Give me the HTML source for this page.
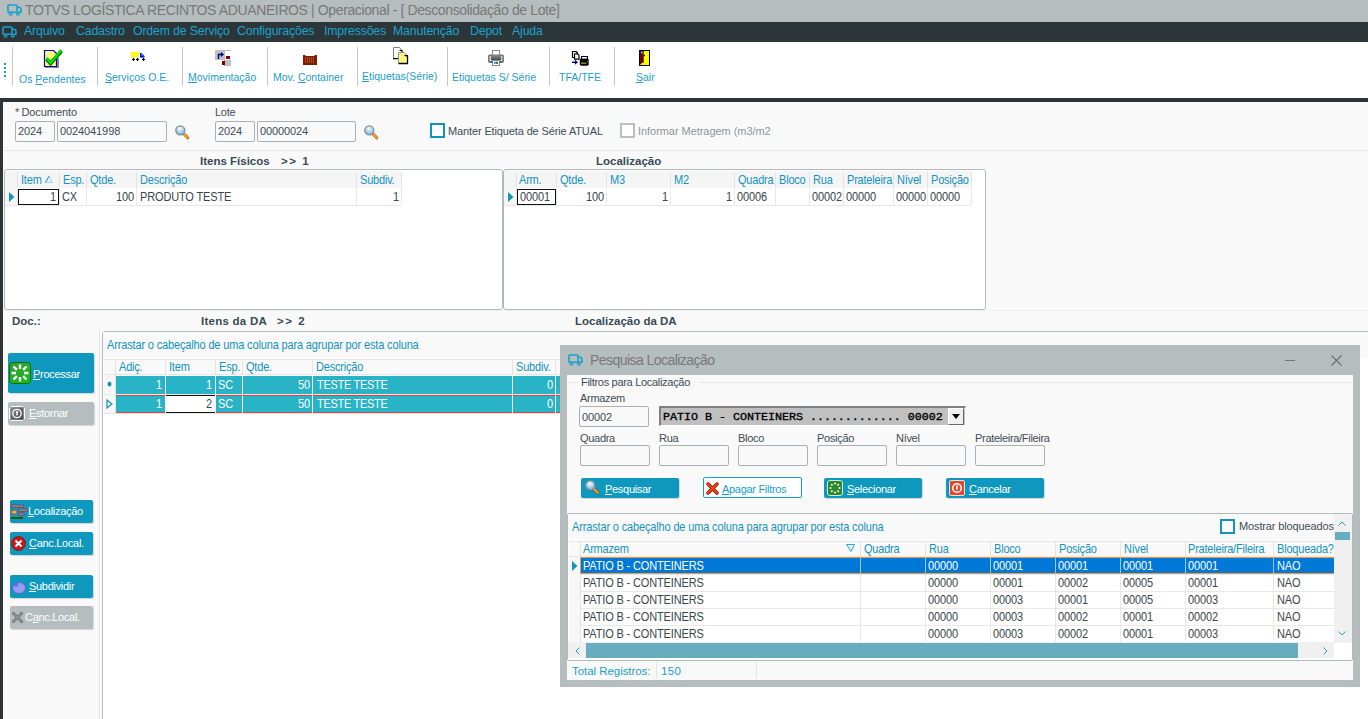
<!DOCTYPE html>
<html><head><meta charset="utf-8">
<style>
*{box-sizing:border-box}
html,body{margin:0;padding:0}
body{width:1368px;height:719px;position:relative;overflow:hidden;background:#f9f9f9;font-family:"Liberation Sans",sans-serif;}
.a{position:absolute}
.t{position:absolute;white-space:nowrap;line-height:1}
.u{text-decoration:underline;text-underline-offset:1px;text-decoration-thickness:1px}
.tb{color:#1b9dcd;font-size:10.5px}
.lbl{color:#3f4d56;font-size:11px;letter-spacing:-0.3px}
.gh{color:#1394c0;font-size:11px;letter-spacing:-0.2px;transform:scaleY(1.13);transform-origin:0 9.3px}
.gd{color:#3a464c;font-size:11px;letter-spacing:-0.1px;transform:scaleY(1.13);transform-origin:0 9.3px}
.bt{color:#fff;font-size:11px;letter-spacing:-0.3px}
.bold{color:#3a4a55;font-size:11.5px;font-weight:bold}
</style></head>
<body>

<div class="a" style="left:0px;top:0px;width:1368px;height:22px;background:#b6bdbf"></div>
<svg class="a" style="left:7px;top:4px" width="15" height="12" viewBox="0 0 15 12"><g fill="none" stroke="#1b9fca" stroke-width="1.6" stroke-linejoin="round"><rect x="1" y="1" width="9" height="7.2" rx="0.8"/><path d="M10 3.2h1.6a2.4 2.4 0 0 1 2.4 2.4v2.6h-4"/><circle cx="3.6" cy="9.7" r="1.35" fill="#b6bdbf" stroke-width="1.3"/><circle cx="10.9" cy="9.7" r="1.35" fill="#b6bdbf" stroke-width="1.3"/></g></svg>
<div class="t" style="left:25px;top:3px;font-size:14px;letter-spacing:-0.38px;color:#787878">TOTVS LOGÍSTICA RECINTOS ADUANEIROS | Operacional - [ Desconsolidação de Lote]</div>
<div class="a" style="left:0px;top:22px;width:1368px;height:20px;background:#2c3639"></div>
<svg class="a" style="left:2px;top:26px" width="15" height="12" viewBox="0 0 15 12"><g fill="none" stroke="#1b9fca" stroke-width="1.6" stroke-linejoin="round"><rect x="1" y="1" width="9" height="7.2" rx="0.8"/><path d="M10 3.2h1.6a2.4 2.4 0 0 1 2.4 2.4v2.6h-4"/><circle cx="3.6" cy="9.7" r="1.35" fill="#2c3639" stroke-width="1.3"/><circle cx="10.9" cy="9.7" r="1.35" fill="#2c3639" stroke-width="1.3"/></g></svg>
<div class="t" style="left:24px;top:25px;font-size:12.3px;letter-spacing:-0.15px;color:#1ba2cf">Arquivo</div>
<div class="t" style="left:76px;top:25px;font-size:12.3px;letter-spacing:-0.15px;color:#1ba2cf">Cadastro</div>
<div class="t" style="left:133px;top:25px;font-size:12.3px;letter-spacing:-0.15px;color:#1ba2cf">Ordem de Serviço</div>
<div class="t" style="left:237px;top:25px;font-size:12.3px;letter-spacing:-0.15px;color:#1ba2cf">Configurações</div>
<div class="t" style="left:324px;top:25px;font-size:12.3px;letter-spacing:-0.15px;color:#1ba2cf">Impressões</div>
<div class="t" style="left:393px;top:25px;font-size:12.3px;letter-spacing:-0.15px;color:#1ba2cf">Manutenção</div>
<div class="t" style="left:470px;top:25px;font-size:12.3px;letter-spacing:-0.15px;color:#1ba2cf">Depot</div>
<div class="t" style="left:512px;top:25px;font-size:12.3px;letter-spacing:-0.15px;color:#1ba2cf">Ajuda</div>
<div class="a" style="left:0px;top:42px;width:1368px;height:56px;background:#fff"></div>
<div class="a" style="left:4px;top:63px;width:2px;height:15px;background:repeating-linear-gradient(#1b9dcd 0 2px,transparent 2px 4px)"></div>
<div class="a" style="left:12px;top:47px;width:1px;height:39px;background:#c3c8ca"></div>
<div class="a" style="left:97px;top:47px;width:1px;height:39px;background:#c3c8ca"></div>
<div class="a" style="left:182px;top:47px;width:1px;height:39px;background:#c3c8ca"></div>
<div class="a" style="left:267px;top:47px;width:1px;height:39px;background:#c3c8ca"></div>
<div class="a" style="left:357px;top:47px;width:1px;height:39px;background:#c3c8ca"></div>
<div class="a" style="left:447px;top:47px;width:1px;height:39px;background:#c3c8ca"></div>
<div class="a" style="left:549px;top:47px;width:1px;height:39px;background:#c3c8ca"></div>
<div class="a" style="left:614px;top:47px;width:1px;height:39px;background:#c3c8ca"></div>
<div class="t tb" style="left:19px;top:74px;">Os <span class="u">P</span>endentes</div>
<div class="t tb" style="left:105px;top:72px;"><span class="u">S</span>erviços O.E.</div>
<div class="t tb" style="left:188px;top:72px;"><span class="u">M</span>ovimentação</div>
<div class="t tb" style="left:273px;top:72px;">Mov. <span class="u">C</span>ontainer</div>
<div class="t tb" style="left:362px;top:71px;"><span class="u">E</span>tiquetas(Série)</div>
<div class="t tb" style="left:452px;top:72px;">Etiquetas S/ Série</div>
<div class="t tb" style="left:559px;top:72px;">TFA/TFE</div>
<div class="t tb" style="left:636px;top:72px;"><span class="u">S</span>air</div>
<svg class="a" style="left:43px;top:48px" width="21" height="21" viewBox="0 0 21 21"><defs><pattern id="chk" width="2" height="2" patternUnits="userSpaceOnUse"><rect width="2" height="2" fill="#ffff00"/><rect width="1" height="1" fill="#fffff0"/><rect x="1" y="1" width="1" height="1" fill="#fffff0"/></pattern></defs><rect x="2" y="10" width="14" height="10" fill="#8c8c8c"/><path d="M1.5 2.5h9l3 3v13h-12z" fill="url(#chk)" stroke="#0000c8" stroke-width="1.2"/><path d="M3.5 11l4 4.5L18.5 3" fill="none" stroke="#006000" stroke-width="3.6" stroke-linejoin="miter"/><path d="M3.5 10.2l4 4.5L18.5 2.2" fill="none" stroke="#00e000" stroke-width="2.6"/></svg>
<svg class="a" style="left:131px;top:52px" width="15" height="11" viewBox="0 0 15 11"><rect x="0" y="0" width="8" height="5" fill="#ffff00"/><rect x="0" y="5" width="14" height="1" fill="#cfe8cf"/><path d="M9 1h1.5l3 3v1.5H9z" fill="#0000ff"/><path d="M10 2l2 2.2" stroke="#00ffff" stroke-width="1"/><path d="M2.5 6v3M1 7.5h3M6.5 6v3M5 7.5h3M12.5 6v3M11 7.5h3" stroke="#000" stroke-width="1.2"/></svg>
<svg class="a" style="left:215px;top:50px" width="16" height="16" viewBox="0 0 16 16"><rect x="0" y="0" width="10" height="10" fill="#c0c0c0"/><rect x="10" y="0" width="6" height="1" fill="#c0c0c0"/><rect x="9" y="10" width="7" height="6" fill="#c0c0c0"/><rect x="11" y="6" width="4" height="3" fill="#800000"/><rect x="7" y="11" width="3" height="4" fill="#800000"/><path d="M3.5 9V4.5h3" fill="none" stroke="#000080" stroke-width="1.4"/><path d="M6 2l3 2.5L6 7z" fill="#000080"/></svg>
<svg class="a" style="left:303px;top:55px" width="14" height="10" viewBox="0 0 14 10"><path d="M0 0h2l1 1h8l1-1h2v10H0z" fill="#7a1c00"/><path d="M2.5 2v6M4.5 2v6M6.5 2v6M8.5 2v6M10.5 2v6" stroke="#b84a00" stroke-width="1"/></svg>
<svg class="a" style="left:393px;top:47px" width="16" height="18" viewBox="0 0 16 18"><defs><pattern id="chk2" width="2" height="2" patternUnits="userSpaceOnUse"><rect width="2" height="2" fill="#ffff00"/><rect width="1" height="1" fill="#ffffff"/><rect x="1" y="1" width="1" height="1" fill="#ffffff"/></pattern></defs><path d="M0.5 11.5V0.5h6l2.5 3" fill="none" stroke="#808080" stroke-width="1"/><path d="M0 11.6h5.5" stroke="#000" stroke-width="1.3"/><path d="M6.5 3.5H9V5.5" fill="none" stroke="#000" stroke-width="1.2"/><path d="M5.5 5.5h5.5l3.5 3.5v7.5h-9z" fill="url(#chk2)"/><path d="M5.5 16.5V5.5h5.5l3.5 3.5" fill="none" stroke="#909090" stroke-width="1"/><path d="M14.5 9v7.5h-9" fill="none" stroke="#000" stroke-width="1.3"/><path d="M11.5 8.7h3v1.5" fill="none" stroke="#000" stroke-width="1.2"/></svg>
<svg class="a" style="left:488px;top:50px" width="16" height="16" viewBox="0 0 16 16"><defs><linearGradient id="pg" x1="0" y1="0" x2="0" y2="1"><stop offset="0" stop-color="#8a8a8a"/><stop offset="1" stop-color="#4a4a4a"/></linearGradient></defs><rect x="4.5" y="0.5" width="7" height="5" fill="#fff" stroke="#8a8a8a"/><rect x="0.5" y="5" width="15" height="7.5" rx="1" fill="#707070" stroke="#7a7a7a"/><rect x="1.5" y="6" width="1.5" height="4.5" fill="#c8d2dc"/><rect x="13" y="6" width="1.5" height="4.5" fill="#c8d2dc"/><rect x="3" y="5.5" width="10" height="4.5" fill="url(#pg)"/><rect x="2" y="10" width="12" height="1.2" fill="#d4e0ec"/><circle cx="14" cy="9.5" r="0.8" fill="#7ad07a"/><rect x="4.5" y="10.5" width="7" height="5" fill="#fff" stroke="#8a8a8a"/><rect x="6" y="11.8" width="1.8" height="2" fill="#2a8ae0"/><rect x="8" y="11.8" width="2" height="2" fill="#1a6a4a"/><rect x="3" y="11" width="1" height="1.5" fill="#202040"/><rect x="12" y="11" width="1" height="1.5" fill="#202040"/></svg>
<svg class="a" style="left:571px;top:50px" width="18" height="17" viewBox="0 0 18 17"><path d="M1.5 1.5h3.5l1.5 1.5v4.5h-5z" fill="#fff" stroke="#000" stroke-width="1.2" stroke-linejoin="round"/><path d="M3.5 3.8h3l1.5 1.5v3.9h-4.5z" fill="#fff" stroke="#000" stroke-width="1.2" stroke-linejoin="round"/><rect x="4.2" y="2.3" width="0.8" height="1.5" fill="#888"/><path d="M1 12.3h4" stroke="#000080" stroke-width="1.5"/><path d="M4 9.8l3 2.5-3 2.5z" fill="#000080"/><path d="M10.5 6.5h6v2.5h-6z" fill="#fff" stroke="#000" stroke-width="1.1"/><path d="M8.8 9.5l1.2-1.2h6.5l1.2 1.2v5l-1.2 1.2h-6.5l-1.2-1.2z" fill="#000"/><rect x="10" y="12.6" width="5.5" height="1.2" fill="#a8a800"/><rect x="16" y="11" width="0.8" height="0.8" fill="#a8a800"/><rect x="11" y="7.3" width="4.5" height="1.2" fill="#fff"/></svg>
<svg class="a" style="left:639px;top:50px" width="11" height="16" viewBox="0 0 11 16"><rect x="0.5" y="0.5" width="10" height="15" fill="#ffff00" stroke="#000" stroke-width="1"/><path d="M1 1h3v11l-3 3z" fill="#800000"/><path d="M4.2 1v12" stroke="#000" stroke-width="0.9"/><rect x="2" y="1.5" width="1.5" height="2" fill="#00ffff"/><circle cx="5.3" cy="5.5" r="0.8" fill="#000"/></svg>
<div class="a" style="left:0px;top:98px;width:1368px;height:4px;background:#2c3639"></div>
<div class="a" style="left:0px;top:98px;width:3px;height:621px;background:#2c3639"></div>
<div class="t lbl" style="left:15px;top:107px;letter-spacing:-0.05px">*&thinsp;Documento</div>
<div class="a" style="left:15px;top:121px;width:40px;height:21px;border:1px solid #a9b0b3;border-radius:2px;background:#f9f9f9"></div>
<div class="a" style="left:57px;top:121px;width:110px;height:21px;border:1px solid #a9b0b3;border-radius:2px;background:#f9f9f9"></div>
<div class="t lbl" style="left:18px;top:126px;letter-spacing:-0.1px">2024</div>
<div class="t lbl" style="left:60px;top:126px;letter-spacing:-0.1px">0024041998</div>
<svg class="a" style="left:175px;top:125px" width="15" height="15" viewBox="0 0 15 15"><defs><radialGradient id="mg" cx="0.45" cy="0.3" r="0.7"><stop offset="0" stop-color="#f4faff"/><stop offset="1" stop-color="#78b4ec"/></radialGradient></defs><path d="M8.8 8.8l4 4" stroke="#c04818" stroke-width="3" stroke-linecap="round"/><path d="M8.8 8.8l4 4" stroke="#f8c030" stroke-width="1.5" stroke-linecap="round"/><circle cx="5.3" cy="5.3" r="4.5" fill="url(#mg)" stroke="#8c8c8c" stroke-width="1.3"/></svg>
<div class="t lbl" style="left:215px;top:107px;">Lote</div>
<div class="a" style="left:215px;top:121px;width:40px;height:21px;border:1px solid #a9b0b3;border-radius:2px;background:#f9f9f9"></div>
<div class="a" style="left:257px;top:121px;width:99px;height:21px;border:1px solid #a9b0b3;border-radius:2px;background:#f9f9f9"></div>
<div class="t lbl" style="left:218px;top:126px;letter-spacing:-0.1px">2024</div>
<div class="t lbl" style="left:260px;top:126px;letter-spacing:-0.1px">00000024</div>
<svg class="a" style="left:364px;top:125px" width="15" height="15" viewBox="0 0 15 15"><defs><radialGradient id="mg" cx="0.45" cy="0.3" r="0.7"><stop offset="0" stop-color="#f4faff"/><stop offset="1" stop-color="#78b4ec"/></radialGradient></defs><path d="M8.8 8.8l4 4" stroke="#c04818" stroke-width="3" stroke-linecap="round"/><path d="M8.8 8.8l4 4" stroke="#f8c030" stroke-width="1.5" stroke-linecap="round"/><circle cx="5.3" cy="5.3" r="4.5" fill="url(#mg)" stroke="#8c8c8c" stroke-width="1.3"/></svg>
<div class="a" style="left:430px;top:123px;width:15px;height:15px;border:2px solid #1296b8;background:#fff"></div>
<div class="t lbl" style="left:448px;top:126px;letter-spacing:-0.13px">Manter Etiqueta de Série ATUAL</div>
<div class="a" style="left:620px;top:123px;width:15px;height:15px;border:2px solid #b9c0c2;background:#fff"></div>
<div class="t lbl" style="left:638px;top:126px;color:#8c969c;letter-spacing:-0.05px">Informar Metragem (m3/m2</div>
<div class="a" style="left:4px;top:150px;width:1364px;height:1px;background:#e3e5e6"></div>
<div class="t bold" style="left:200px;top:156px;">Itens Físicos</div>
<div class="t bold" style="left:281px;top:156px;letter-spacing:1.5px">&gt;&gt; 1</div>
<div class="t bold" style="left:596px;top:156px;">Localização</div>
<div class="a" style="left:4px;top:169px;width:499px;height:141px;border:1px solid #b4babc;border-radius:3px;background:#fff"></div>
<div class="a" style="left:5px;top:171px;width:396px;height:17px;background:#f5f5f5"></div>
<div class="a" style="left:17px;top:172px;width:1px;height:15px;background:#e4e4e4"></div>
<div class="a" style="left:59px;top:172px;width:1px;height:15px;background:#e4e4e4"></div>
<div class="a" style="left:86px;top:172px;width:1px;height:15px;background:#e4e4e4"></div>
<div class="a" style="left:136px;top:172px;width:1px;height:15px;background:#e4e4e4"></div>
<div class="a" style="left:356px;top:172px;width:1px;height:15px;background:#e4e4e4"></div>
<div class="a" style="left:401px;top:172px;width:1px;height:15px;background:#e4e4e4"></div>
<div class="t gh" style="left:21px;top:175px;">Item</div>
<div class="t gh" style="left:63px;top:175px;">Esp.</div>
<div class="t gh" style="left:90px;top:175px;">Qtde.</div>
<div class="t gh" style="left:140px;top:175px;">Descrição</div>
<div class="t gh" style="left:360px;top:175px;">Subdiv.</div>
<svg class="a" style="left:44px;top:174px" width="10" height="10" viewBox="0 0 10 10"><path d="M1.5 8.5L5 2l3.5 6.5z" fill="#dff3fa" stroke="#8fd3ea" stroke-width="0.8"/><path d="M1.5 8.5L5 2" stroke="#1a9fca" stroke-width="1"/></svg>
<div class="a" style="left:17px;top:188px;width:1px;height:17px;background:#e8e8e8"></div>
<div class="a" style="left:59px;top:188px;width:1px;height:17px;background:#e8e8e8"></div>
<div class="a" style="left:86px;top:188px;width:1px;height:17px;background:#e8e8e8"></div>
<div class="a" style="left:136px;top:188px;width:1px;height:17px;background:#e8e8e8"></div>
<div class="a" style="left:356px;top:188px;width:1px;height:17px;background:#e8e8e8"></div>
<div class="a" style="left:401px;top:188px;width:1px;height:17px;background:#e8e8e8"></div>
<div class="a" style="left:5px;top:205px;width:396px;height:1px;background:#e8e8e8"></div>
<div class="a" style="left:5px;top:188px;width:12px;height:17px;background:#f5f5f5"></div>
<div class="a" style="left:18px;top:189px;width:41px;height:16px;border:1.5px solid #111"></div>
<svg class="a" style="left:9px;top:192px" width="6" height="10" viewBox="0 0 6 10"><path d="M0 0l5.5 5L0 10z" fill="#1593b8"/></svg>
<div class="t gd" style="right:1312px;top:192px;">1</div>
<div class="t gd" style="left:62px;top:192px;">CX</div>
<div class="t gd" style="right:1234px;top:192px;">100</div>
<div class="t gd" style="left:140px;top:192px;letter-spacing:-0.15px">PRODUTO TESTE</div>
<div class="t gd" style="right:969px;top:192px;">1</div>
<div class="a" style="left:503px;top:169px;width:483px;height:141px;border:1px solid #b4babc;border-radius:3px;background:#fff"></div>
<div class="a" style="left:504px;top:171px;width:467px;height:17px;background:#f5f5f5"></div>
<div class="a" style="left:516px;top:172px;width:1px;height:15px;background:#e4e4e4"></div>
<div class="a" style="left:556px;top:172px;width:1px;height:15px;background:#e4e4e4"></div>
<div class="a" style="left:606px;top:172px;width:1px;height:15px;background:#e4e4e4"></div>
<div class="a" style="left:670px;top:172px;width:1px;height:15px;background:#e4e4e4"></div>
<div class="a" style="left:734px;top:172px;width:1px;height:15px;background:#e4e4e4"></div>
<div class="a" style="left:775px;top:172px;width:1px;height:15px;background:#e4e4e4"></div>
<div class="a" style="left:809px;top:172px;width:1px;height:15px;background:#e4e4e4"></div>
<div class="a" style="left:843px;top:172px;width:1px;height:15px;background:#e4e4e4"></div>
<div class="a" style="left:893px;top:172px;width:1px;height:15px;background:#e4e4e4"></div>
<div class="a" style="left:927px;top:172px;width:1px;height:15px;background:#e4e4e4"></div>
<div class="a" style="left:971px;top:172px;width:1px;height:15px;background:#e4e4e4"></div>
<div class="t gh" style="left:519px;top:175px;">Arm.</div>
<div class="t gh" style="left:560px;top:175px;">Qtde.</div>
<div class="t gh" style="left:610px;top:175px;">M3</div>
<div class="t gh" style="left:674px;top:175px;">M2</div>
<div class="t gh" style="left:738px;top:175px;">Quadra</div>
<div class="t gh" style="left:779px;top:175px;">Bloco</div>
<div class="t gh" style="left:813px;top:175px;">Rua</div>
<div class="t gh" style="left:847px;top:175px;">Prateleira</div>
<div class="t gh" style="left:897px;top:175px;">Nível</div>
<div class="t gh" style="left:931px;top:175px;">Posição</div>
<div class="a" style="left:516px;top:188px;width:1px;height:17px;background:#e8e8e8"></div>
<div class="a" style="left:556px;top:188px;width:1px;height:17px;background:#e8e8e8"></div>
<div class="a" style="left:606px;top:188px;width:1px;height:17px;background:#e8e8e8"></div>
<div class="a" style="left:670px;top:188px;width:1px;height:17px;background:#e8e8e8"></div>
<div class="a" style="left:734px;top:188px;width:1px;height:17px;background:#e8e8e8"></div>
<div class="a" style="left:775px;top:188px;width:1px;height:17px;background:#e8e8e8"></div>
<div class="a" style="left:809px;top:188px;width:1px;height:17px;background:#e8e8e8"></div>
<div class="a" style="left:843px;top:188px;width:1px;height:17px;background:#e8e8e8"></div>
<div class="a" style="left:893px;top:188px;width:1px;height:17px;background:#e8e8e8"></div>
<div class="a" style="left:927px;top:188px;width:1px;height:17px;background:#e8e8e8"></div>
<div class="a" style="left:971px;top:188px;width:1px;height:17px;background:#e8e8e8"></div>
<div class="a" style="left:504px;top:205px;width:467px;height:1px;background:#e8e8e8"></div>
<div class="a" style="left:504px;top:188px;width:12px;height:17px;background:#f5f5f5"></div>
<div class="a" style="left:517px;top:189px;width:39px;height:16px;border:1.5px solid #111"></div>
<svg class="a" style="left:508px;top:192px" width="6" height="10" viewBox="0 0 6 10"><path d="M0 0l5.5 5L0 10z" fill="#1593b8"/></svg>
<div class="t gd" style="left:520px;top:192px;">00001</div>
<div class="t gd" style="right:764px;top:192px;">100</div>
<div class="t gd" style="right:700px;top:192px;">1</div>
<div class="t gd" style="right:636px;top:192px;">1</div>
<div class="t gd" style="left:737px;top:192px;">00006</div>
<div class="t gd" style="right:526px;top:192px;">00002</div>
<div class="t gd" style="left:846px;top:192px;">00000</div>
<div class="t gd" style="right:442px;top:192px;">00000</div>
<div class="t gd" style="left:930px;top:192px;">00000</div>
<div class="a" style="left:4px;top:310px;width:1364px;height:1px;background:#eeeeee"></div>
<div class="t bold" style="left:12px;top:316px;">Doc.:</div>
<div class="t bold" style="left:201px;top:316px;letter-spacing:0.25px">Itens da DA</div>
<div class="t bold" style="left:277px;top:316px;letter-spacing:1.5px">&gt;&gt; 2</div>
<div class="t bold" style="left:575px;top:316px;">Localização da DA</div>
<div class="a" style="left:99px;top:329px;width:1px;height:390px;background:#e2e4e5"></div>
<div class="a" style="left:102px;top:331px;width:1268px;height:400px;border:1px solid #b4babc;border-radius:3px;background:#fff"></div>
<div class="a" style="left:103px;top:332px;width:1265px;height:26px;background:#f9f9f9"></div>
<div class="t gh" style="left:107px;top:340px;letter-spacing:-0.15px">Arrastar o cabeçalho de uma coluna para agrupar por esta coluna</div>
<div class="a" style="left:104px;top:359px;width:496px;height:16px;background:#f9f9f9"></div>
<div class="a" style="left:104px;top:359px;width:496px;height:1px;background:#e6e6e6"></div>
<div class="a" style="left:104px;top:374px;width:496px;height:1px;background:#e6e6e6"></div>
<div class="a" style="left:115px;top:360px;width:1px;height:14px;background:#e4e4e4"></div>
<div class="a" style="left:165px;top:360px;width:1px;height:14px;background:#e4e4e4"></div>
<div class="a" style="left:215px;top:360px;width:1px;height:14px;background:#e4e4e4"></div>
<div class="a" style="left:242px;top:360px;width:1px;height:14px;background:#e4e4e4"></div>
<div class="a" style="left:312px;top:360px;width:1px;height:14px;background:#e4e4e4"></div>
<div class="a" style="left:512px;top:360px;width:1px;height:14px;background:#e4e4e4"></div>
<div class="a" style="left:555px;top:360px;width:1px;height:14px;background:#e4e4e4"></div>
<div class="a" style="left:600px;top:360px;width:1px;height:14px;background:#e4e4e4"></div>
<div class="t gh" style="left:119px;top:362px;">Adiç.</div>
<div class="t gh" style="left:169px;top:362px;">Item</div>
<div class="t gh" style="left:219px;top:362px;">Esp.</div>
<div class="t gh" style="left:246px;top:362px;">Qtde.</div>
<div class="t gh" style="left:316px;top:362px;">Descrição</div>
<div class="t gh" style="left:516px;top:362px;">Subdiv.</div>
<div class="a" style="left:115px;top:376px;width:485px;height:18px;background:#29b3c6"></div>
<div class="a" style="left:165px;top:376px;width:1px;height:18px;background:#fff"></div>
<div class="a" style="left:215px;top:376px;width:1px;height:18px;background:#fff"></div>
<div class="a" style="left:242px;top:376px;width:1px;height:18px;background:#fff"></div>
<div class="a" style="left:312px;top:376px;width:1px;height:18px;background:#fff"></div>
<div class="a" style="left:512px;top:376px;width:1px;height:18px;background:#fff"></div>
<div class="a" style="left:555px;top:376px;width:1px;height:18px;background:#fff"></div>
<div class="a" style="left:104px;top:394px;width:496px;height:1px;background:#e8e8e8"></div>
<div class="a" style="left:115px;top:395px;width:485px;height:18px;background:#29b3c6;border-top:1px solid #e0413a;border-bottom:1px solid #e0413a"></div>
<div class="a" style="left:115px;top:395px;width:1px;height:18px;background:#e0413a"></div>
<div class="a" style="left:165px;top:395px;width:50px;height:18px;background:#fff;border-top:1px solid #111;border-bottom:1px solid #111"></div>
<div class="a" style="left:165px;top:395px;width:1px;height:18px;background:#fff"></div>
<div class="a" style="left:215px;top:395px;width:1px;height:18px;background:#fff"></div>
<div class="a" style="left:242px;top:395px;width:1px;height:18px;background:#fff"></div>
<div class="a" style="left:312px;top:395px;width:1px;height:18px;background:#fff"></div>
<div class="a" style="left:512px;top:395px;width:1px;height:18px;background:#fff"></div>
<div class="a" style="left:555px;top:395px;width:1px;height:18px;background:#fff"></div>
<div class="a" style="left:104px;top:413px;width:496px;height:1px;background:#e8e8e8"></div>
<div class="a" style="left:104px;top:375px;width:11px;height:38px;background:#f7f7f7"></div>
<div class="a" style="left:104px;top:394px;width:11px;height:1px;background:#e8e8e8"></div>
<div class="a" style="left:115px;top:359px;width:1px;height:54px;background:#e4e4e4"></div>
<svg class="a" style="left:107px;top:381px" width="5" height="6"><ellipse cx="2.5" cy="3" rx="2" ry="2.5" fill="#1593b8"/></svg>
<svg class="a" style="left:106px;top:399px" width="7" height="10" viewBox="0 0 7 10"><path d="M1 1l5 4-5 4z" fill="none" stroke="#1593b8" stroke-width="1.2"/></svg>
<div class="t gd" style="right:1206px;top:380px;color:#fff">1</div>
<div class="t gd" style="right:1156px;top:380px;color:#fff">1</div>
<div class="t gd" style="left:218px;top:380px;color:#fff">SC</div>
<div class="t gd" style="right:1058px;top:380px;color:#fff">50</div>
<div class="t gd" style="left:317px;top:380px;color:#fff;letter-spacing:-0.3px">TESTE TESTE</div>
<div class="t gd" style="right:815px;top:380px;color:#fff">0</div>
<div class="t gd" style="right:1206px;top:399px;color:#fff">1</div>
<div class="t gd" style="right:1156px;top:399px;">2</div>
<div class="t gd" style="left:218px;top:399px;color:#fff">SC</div>
<div class="t gd" style="right:1058px;top:399px;color:#fff">50</div>
<div class="t gd" style="left:317px;top:399px;color:#fff;letter-spacing:-0.3px">TESTE TESTE</div>
<div class="t gd" style="right:815px;top:399px;color:#fff">0</div>
<div class="a" style="left:8px;top:353px;width:86px;height:40px;background:#0e98be;border-radius:2px;box-shadow:1px 1px 1px rgba(0,0,0,0.15)"></div>
<svg class="a" style="left:9px;top:362px" width="22" height="22" viewBox="0 0 22 22"><defs><linearGradient id="pgr" x1="0" y1="0" x2="1" y2="1"><stop offset="0" stop-color="#3a9a3a"/><stop offset="1" stop-color="#10c010"/></linearGradient></defs><rect x="0.5" y="0.5" width="21" height="21" rx="3" fill="url(#pgr)" stroke="#0a700a"/><g stroke="#fff" stroke-width="2.4" stroke-linecap="butt"><path d="M11 2.5v4.5M11 15v4.5M2.5 11H7M15 11h4.5M4.5 4.5l3.4 3.4M14.1 14.1l3.4 3.4M4.5 17.5l3.4-3.4M14.1 7.9l3.4-3.4"/></g></svg>
<div class="t bt" style="left:33px;top:369px;"><span class="u">P</span>rocessar</div>
<div class="a" style="left:8px;top:402px;width:86px;height:23px;background:#b6bdbf;border-radius:2px;box-shadow:1px 1px 1px rgba(0,0,0,0.15)"></div>
<svg class="a" style="left:9px;top:405px" width="16" height="17" viewBox="0 0 16 17"><defs><linearGradient id="eg" x1="0" y1="0" x2="1" y2="1"><stop offset="0" stop-color="#8a8a8a"/><stop offset="1" stop-color="#444"/></linearGradient></defs><rect x="2" y="1" width="12" height="1" fill="#fff"/><rect x="2" y="15" width="12" height="1" fill="#fff"/><rect x="0" y="3" width="1" height="11" fill="#fff"/><rect x="15" y="3" width="1" height="11" fill="#fff"/><rect x="1.5" y="2.3" width="13" height="12.5" rx="1.2" fill="url(#eg)"/><circle cx="8" cy="8.5" r="4.2" fill="none" stroke="#fff" stroke-width="1.3"/><path d="M7 6.2h2.2v1.2l-0.5 0.8v2.2H7.3V8.2L7 7.4z" fill="#fff"/></svg>
<div class="t bt" style="left:29px;top:408px;color:#ffffff"><span class="u">E</span>stornar</div>
<div class="a" style="left:10px;top:500px;width:83px;height:23px;background:#0e98be;border-radius:2px;box-shadow:1px 1px 1px rgba(0,0,0,0.15)"></div>
<svg class="a" style="left:11px;top:504px" width="17" height="16" viewBox="0 0 17 16"><rect x="0.5" y="1" width="12" height="2.5" fill="#3cc03c" stroke="#a028a0" stroke-width="0.9"/><rect x="7.5" y="5" width="9" height="2.5" fill="#3cc03c" stroke="#a028a0" stroke-width="0.9"/><rect x="7.5" y="9" width="5.5" height="2.5" fill="#3cc03c" stroke="#a028a0" stroke-width="0.9"/><rect x="0" y="13" width="12" height="2" fill="#0a5a0a"/><path d="M0.5 6.8h2.5V5.2l3 3-3 3V9.6H0.5z" fill="#f8b040" stroke="#d04020" stroke-width="0.7"/></svg>
<div class="t bt" style="left:28px;top:506px;"><span class="u">L</span>ocalização</div>
<div class="a" style="left:10px;top:532px;width:83px;height:23px;background:#0e98be;border-radius:2px;box-shadow:1px 1px 1px rgba(0,0,0,0.15)"></div>
<svg class="a" style="left:11px;top:536px" width="15" height="15" viewBox="0 0 15 15"><circle cx="7.5" cy="7.5" r="7" fill="#c81818" stroke="#801010" stroke-width="0.8"/><path d="M4.5 4.5l6 6M10.5 4.5l-6 6" stroke="#fff" stroke-width="2"/></svg>
<div class="t bt" style="left:29px;top:538px;"><span class="u">C</span>anc.Local.</div>
<div class="a" style="left:10px;top:575px;width:83px;height:23px;background:#0e98be;border-radius:2px;box-shadow:1px 1px 1px rgba(0,0,0,0.15)"></div>
<svg class="a" style="left:11px;top:580px" width="15" height="14" viewBox="0 0 15 14"><ellipse cx="8" cy="8" rx="6.5" ry="5.5" fill="#9a9af0" stroke="#6060c0" stroke-width="0.8"/><path d="M1 6.5a6 4 0 0 1 6-5v5z" fill="#4a7ae0"/></svg>
<div class="t bt" style="left:29px;top:581px;"><span class="u">S</span>ubdividir</div>
<div class="a" style="left:10px;top:606px;width:83px;height:23px;background:#b6bdbf;border-radius:2px;box-shadow:1px 1px 1px rgba(0,0,0,0.15)"></div>
<svg class="a" style="left:11px;top:611px" width="13" height="13" viewBox="0 0 13 13"><path d="M1.5 1.5l10 10M11.5 1.5l-10 10" stroke="#666" stroke-width="2.6"/><path d="M1.5 1.5l10 10M11.5 1.5l-10 10" stroke="#999" stroke-width="1.2"/></svg>
<div class="t bt" style="left:25px;top:612px;color:#ffffff">C<span class="u">a</span>nc.Local.</div>
<div class="a" style="left:560px;top:345px;width:800px;height:342px;background:#b6bdbf"></div>
<div class="a" style="left:567px;top:375px;width:786px;height:305px;background:#f9f9f9"></div>
<svg class="a" style="left:568px;top:354px" width="15" height="12" viewBox="0 0 15 12"><g fill="none" stroke="#1b9fca" stroke-width="1.6" stroke-linejoin="round"><rect x="1" y="1" width="9" height="7.2" rx="0.8"/><path d="M10 3.2h1.6a2.4 2.4 0 0 1 2.4 2.4v2.6h-4"/><circle cx="3.6" cy="9.7" r="1.35" fill="#b6bdbf" stroke-width="1.3"/><circle cx="10.9" cy="9.7" r="1.35" fill="#b6bdbf" stroke-width="1.3"/></g></svg>
<div class="t" style="left:590px;top:353px;font-size:14px;letter-spacing:-0.55px;color:#787878">Pesquisa Localização</div>
<div class="a" style="left:1285px;top:360px;width:10px;height:1px;background:#777"></div>
<svg class="a" style="left:1331px;top:355px" width="11" height="11" viewBox="0 0 11 11"><path d="M0.5 0.5l10 10M10.5 0.5l-10 10" stroke="#6e6e6e" stroke-width="1.1"/></svg>
<div class="a" style="left:568px;top:382px;width:11px;height:1px;background:#e2e4e5"></div>
<div class="a" style="left:699px;top:382px;width:653px;height:1px;background:#e2e4e5"></div>
<div class="t lbl" style="left:581px;top:377px;">Filtros para Localização</div>
<div class="t lbl" style="left:580px;top:393px;">Armazem</div>
<div class="a" style="left:579px;top:406px;width:70px;height:21px;border:1px solid #a9b0b3;border-radius:2px;background:#f9f9f9"></div>
<div class="t lbl" style="left:582px;top:412px;letter-spacing:-0.1px">00002</div>
<div class="a" style="left:659px;top:406px;width:307px;height:20px;background:#c0c0c0;border-top:2px solid #808080;border-left:2px solid #808080;border-bottom:1px solid #fff;border-right:1px solid #fff"></div>
<div class="a" style="left:948px;top:408px;width:16px;height:17px;background:#f0f0f0;border-right:1px solid #696969;border-bottom:1px solid #696969;border-top:1px solid #fff;border-left:1px solid #fff"></div>
<svg class="a" style="left:952px;top:414px" width="8" height="5"><path d="M0 0h8L4 5z" fill="#000"/></svg>
<div class="t" style="left:663px;top:412px;font-family:'Liberation Mono',monospace;font-size:11.67px;color:#000;-webkit-text-stroke:0.35px #000">PATIO B - CONTEINERS ............. 00002</div>
<div class="t lbl" style="left:580px;top:433px;">Quadra</div>
<div class="a" style="left:580px;top:445px;width:70px;height:21px;border:1px solid #a9b0b3;border-radius:2px;background:#f9f9f9"></div>
<div class="t lbl" style="left:659px;top:433px;">Rua</div>
<div class="a" style="left:659px;top:445px;width:70px;height:21px;border:1px solid #a9b0b3;border-radius:2px;background:#f9f9f9"></div>
<div class="t lbl" style="left:738px;top:433px;">Bloco</div>
<div class="a" style="left:738px;top:445px;width:70px;height:21px;border:1px solid #a9b0b3;border-radius:2px;background:#f9f9f9"></div>
<div class="t lbl" style="left:817px;top:433px;">Posição</div>
<div class="a" style="left:817px;top:445px;width:70px;height:21px;border:1px solid #a9b0b3;border-radius:2px;background:#f9f9f9"></div>
<div class="t lbl" style="left:896px;top:433px;">Nível</div>
<div class="a" style="left:896px;top:445px;width:70px;height:21px;border:1px solid #a9b0b3;border-radius:2px;background:#f9f9f9"></div>
<div class="t lbl" style="left:975px;top:433px;">Prateleira/Fileira</div>
<div class="a" style="left:975px;top:445px;width:70px;height:21px;border:1px solid #a9b0b3;border-radius:2px;background:#f9f9f9"></div>
<div class="a" style="left:581px;top:478px;width:98px;height:20px;background:#0e98be;border-radius:2px;box-shadow:1px 1px 1px rgba(0,0,0,0.15)"></div>
<svg class="a" style="left:585px;top:480px" width="15" height="15" viewBox="0 0 15 15"><defs><radialGradient id="mg" cx="0.45" cy="0.3" r="0.7"><stop offset="0" stop-color="#f4faff"/><stop offset="1" stop-color="#78b4ec"/></radialGradient></defs><path d="M8.8 8.8l4 4" stroke="#c04818" stroke-width="3" stroke-linecap="round"/><path d="M8.8 8.8l4 4" stroke="#f8c030" stroke-width="1.5" stroke-linecap="round"/><circle cx="5.3" cy="5.3" r="4.5" fill="url(#mg)" stroke="#8c8c8c" stroke-width="1.3"/></svg>
<div class="t bt" style="left:605px;top:484px;"><span class="u">P</span>esquisar</div>
<div class="a" style="left:703px;top:477px;width:99px;height:21px;background:#fff;border:1px solid #1a9fca;border-radius:2px"></div>
<svg class="a" style="left:705px;top:481px" width="15" height="15" viewBox="0 0 15 15"><path d="M3 3l9 9M12 3l-9 9" stroke="#800000" stroke-width="3.4" stroke-linecap="round"/><path d="M3 3l9 9M12 3l-9 9" stroke="#f04a10" stroke-width="2" stroke-linecap="round"/></svg>
<div class="t bt" style="left:722px;top:484px;color:#1a9fca"><span class="u">A</span>pagar Filtros</div>
<div class="a" style="left:824px;top:478px;width:98px;height:20px;background:#0e98be;border-radius:2px;box-shadow:1px 1px 1px rgba(0,0,0,0.15)"></div>
<svg class="a" style="left:827px;top:480px" width="16" height="16" viewBox="0 0 16 16"><rect x="0.5" y="0.5" width="15" height="15" rx="2.5" fill="#2a8a2a" stroke="#fff" stroke-width="0.8"/><g fill="#fff"><circle cx="8" cy="3.5" r="1"/><circle cx="8" cy="12.5" r="1"/><circle cx="3.5" cy="8" r="1"/><circle cx="12.5" cy="8" r="1"/><circle cx="4.8" cy="4.8" r="1"/><circle cx="11.2" cy="11.2" r="1"/><circle cx="4.8" cy="11.2" r="1"/><circle cx="11.2" cy="4.8" r="1"/></g></svg>
<div class="t bt" style="left:847px;top:484px;"><span class="u">S</span>elecionar</div>
<div class="a" style="left:946px;top:478px;width:98px;height:20px;background:#0e98be;border-radius:2px;box-shadow:1px 1px 1px rgba(0,0,0,0.15)"></div>
<svg class="a" style="left:949px;top:480px" width="16" height="16" viewBox="0 0 16 16"><rect x="0.5" y="0.5" width="15" height="15" rx="1.5" fill="#e04a2a" stroke="#fff" stroke-width="0.8"/><circle cx="8" cy="8" r="4.3" fill="none" stroke="#fff" stroke-width="1.6"/><path d="M8 5.5v4" stroke="#fff" stroke-width="1.6"/></svg>
<div class="t bt" style="left:969px;top:484px;"><span class="u">C</span>ancelar</div>
<div class="a" style="left:567px;top:513px;width:786px;height:148px;border:1px solid #b4babc;border-radius:2px;background:#fff"></div>
<div class="a" style="left:568px;top:514px;width:784px;height:26px;background:#f9f9f9"></div>
<div class="t gh" style="left:572px;top:522px;letter-spacing:-0.15px">Arrastar o cabeçalho de uma coluna para agrupar por esta coluna</div>
<div class="a" style="left:1220px;top:519px;width:15px;height:15px;border:2px solid #1296b8;background:#fff"></div>
<div class="t lbl" style="left:1239px;top:521px;letter-spacing:-0.13px">Mostrar bloqueados</div>
<div class="a" style="left:569px;top:541px;width:765px;height:16px;background:#f9f9f9"></div>
<div class="a" style="left:569px;top:541px;width:765px;height:1px;background:#e6e6e6"></div>
<div class="a" style="left:569px;top:556px;width:765px;height:1px;background:#e6e6e6"></div>
<div class="a" style="left:580px;top:542px;width:1px;height:14px;background:#e4e4e4"></div>
<div class="a" style="left:860px;top:542px;width:1px;height:14px;background:#e4e4e4"></div>
<div class="a" style="left:925px;top:542px;width:1px;height:14px;background:#e4e4e4"></div>
<div class="a" style="left:990px;top:542px;width:1px;height:14px;background:#e4e4e4"></div>
<div class="a" style="left:1055px;top:542px;width:1px;height:14px;background:#e4e4e4"></div>
<div class="a" style="left:1120px;top:542px;width:1px;height:14px;background:#e4e4e4"></div>
<div class="a" style="left:1185px;top:542px;width:1px;height:14px;background:#e4e4e4"></div>
<div class="a" style="left:1273px;top:542px;width:1px;height:14px;background:#e4e4e4"></div>
<div class="a" style="left:1334px;top:542px;width:1px;height:14px;background:#e4e4e4"></div>
<div class="t gh" style="left:583px;top:544px;">Armazem</div>
<div class="t gh" style="left:864px;top:544px;">Quadra</div>
<div class="t gh" style="left:929px;top:544px;">Rua</div>
<div class="t gh" style="left:994px;top:544px;">Bloco</div>
<div class="t gh" style="left:1059px;top:544px;">Posição</div>
<div class="t gh" style="left:1124px;top:544px;">Nível</div>
<div class="t gh" style="left:1188px;top:544px;">Prateleira/Fileira</div>
<div class="t gh" style="left:1277px;top:544px;">Bloqueada?</div>
<svg class="a" style="left:846px;top:544px" width="9" height="8" viewBox="0 0 9 8"><path d="M0.5 0.5h8L5 7.5z" fill="#dff3fa" stroke="#1a9fca" stroke-width="0.9"/></svg>
<div class="a" style="left:569px;top:557px;width:11px;height:17px;background:#f7f7f7"></div>
<div class="a" style="left:580px;top:557px;width:754px;height:17px;background:#0078d7;border-top:1px solid #f39a3c;border-bottom:1px solid #f39a3c"></div>
<div class="a" style="left:580px;top:557px;width:1px;height:17px;background:#f39a3c"></div>
<div class="a" style="left:860px;top:558px;width:1px;height:15px;background:#9cc8ee"></div>
<div class="a" style="left:925px;top:558px;width:1px;height:15px;background:#9cc8ee"></div>
<div class="a" style="left:990px;top:558px;width:1px;height:15px;background:#9cc8ee"></div>
<div class="a" style="left:1055px;top:558px;width:1px;height:15px;background:#9cc8ee"></div>
<div class="a" style="left:1120px;top:558px;width:1px;height:15px;background:#9cc8ee"></div>
<div class="a" style="left:1185px;top:558px;width:1px;height:15px;background:#9cc8ee"></div>
<div class="a" style="left:1273px;top:558px;width:1px;height:15px;background:#9cc8ee"></div>
<svg class="a" style="left:572px;top:561px" width="6" height="10" viewBox="0 0 6 10"><path d="M0 0l5.5 5L0 10z" fill="#1593b8"/></svg>
<div class="a" style="left:569px;top:574px;width:765px;height:1px;background:#e8e8e8"></div>
<div class="a" style="left:580px;top:557px;width:1px;height:17px;background:#f39a3c"></div>
<div class="t gd" style="left:583px;top:561px;color:#fff;letter-spacing:-0.15px">PATIO B - CONTEINERS</div>
<div class="t gd" style="left:928px;top:561px;color:#fff">00000</div>
<div class="t gd" style="left:993px;top:561px;color:#fff">00001</div>
<div class="t gd" style="left:1058px;top:561px;color:#fff">00001</div>
<div class="t gd" style="left:1123px;top:561px;color:#fff">00001</div>
<div class="t gd" style="left:1188px;top:561px;color:#fff">00001</div>
<div class="t gd" style="left:1277px;top:561px;color:#fff">NAO</div>
<div class="a" style="left:569px;top:574px;width:11px;height:17px;background:#f7f7f7"></div>
<div class="a" style="left:860px;top:574px;width:1px;height:17px;background:#e8e8e8"></div>
<div class="a" style="left:925px;top:574px;width:1px;height:17px;background:#e8e8e8"></div>
<div class="a" style="left:990px;top:574px;width:1px;height:17px;background:#e8e8e8"></div>
<div class="a" style="left:1055px;top:574px;width:1px;height:17px;background:#e8e8e8"></div>
<div class="a" style="left:1120px;top:574px;width:1px;height:17px;background:#e8e8e8"></div>
<div class="a" style="left:1185px;top:574px;width:1px;height:17px;background:#e8e8e8"></div>
<div class="a" style="left:1273px;top:574px;width:1px;height:17px;background:#e8e8e8"></div>
<div class="a" style="left:569px;top:591px;width:765px;height:1px;background:#e8e8e8"></div>
<div class="a" style="left:580px;top:574px;width:1px;height:17px;background:#e4e4e4"></div>
<div class="t gd" style="left:583px;top:578px;;letter-spacing:-0.15px">PATIO B - CONTEINERS</div>
<div class="t gd" style="left:928px;top:578px;">00000</div>
<div class="t gd" style="left:993px;top:578px;">00001</div>
<div class="t gd" style="left:1058px;top:578px;">00002</div>
<div class="t gd" style="left:1123px;top:578px;">00005</div>
<div class="t gd" style="left:1188px;top:578px;">00001</div>
<div class="t gd" style="left:1277px;top:578px;">NAO</div>
<div class="a" style="left:569px;top:591px;width:11px;height:17px;background:#f7f7f7"></div>
<div class="a" style="left:860px;top:591px;width:1px;height:17px;background:#e8e8e8"></div>
<div class="a" style="left:925px;top:591px;width:1px;height:17px;background:#e8e8e8"></div>
<div class="a" style="left:990px;top:591px;width:1px;height:17px;background:#e8e8e8"></div>
<div class="a" style="left:1055px;top:591px;width:1px;height:17px;background:#e8e8e8"></div>
<div class="a" style="left:1120px;top:591px;width:1px;height:17px;background:#e8e8e8"></div>
<div class="a" style="left:1185px;top:591px;width:1px;height:17px;background:#e8e8e8"></div>
<div class="a" style="left:1273px;top:591px;width:1px;height:17px;background:#e8e8e8"></div>
<div class="a" style="left:569px;top:608px;width:765px;height:1px;background:#e8e8e8"></div>
<div class="a" style="left:580px;top:591px;width:1px;height:17px;background:#e4e4e4"></div>
<div class="t gd" style="left:583px;top:595px;;letter-spacing:-0.15px">PATIO B - CONTEINERS</div>
<div class="t gd" style="left:928px;top:595px;">00000</div>
<div class="t gd" style="left:993px;top:595px;">00003</div>
<div class="t gd" style="left:1058px;top:595px;">00001</div>
<div class="t gd" style="left:1123px;top:595px;">00005</div>
<div class="t gd" style="left:1188px;top:595px;">00003</div>
<div class="t gd" style="left:1277px;top:595px;">NAO</div>
<div class="a" style="left:569px;top:608px;width:11px;height:17px;background:#f7f7f7"></div>
<div class="a" style="left:860px;top:608px;width:1px;height:17px;background:#e8e8e8"></div>
<div class="a" style="left:925px;top:608px;width:1px;height:17px;background:#e8e8e8"></div>
<div class="a" style="left:990px;top:608px;width:1px;height:17px;background:#e8e8e8"></div>
<div class="a" style="left:1055px;top:608px;width:1px;height:17px;background:#e8e8e8"></div>
<div class="a" style="left:1120px;top:608px;width:1px;height:17px;background:#e8e8e8"></div>
<div class="a" style="left:1185px;top:608px;width:1px;height:17px;background:#e8e8e8"></div>
<div class="a" style="left:1273px;top:608px;width:1px;height:17px;background:#e8e8e8"></div>
<div class="a" style="left:569px;top:625px;width:765px;height:1px;background:#e8e8e8"></div>
<div class="a" style="left:580px;top:608px;width:1px;height:17px;background:#e4e4e4"></div>
<div class="t gd" style="left:583px;top:612px;;letter-spacing:-0.15px">PATIO B - CONTEINERS</div>
<div class="t gd" style="left:928px;top:612px;">00000</div>
<div class="t gd" style="left:993px;top:612px;">00003</div>
<div class="t gd" style="left:1058px;top:612px;">00002</div>
<div class="t gd" style="left:1123px;top:612px;">00001</div>
<div class="t gd" style="left:1188px;top:612px;">00002</div>
<div class="t gd" style="left:1277px;top:612px;">NAO</div>
<div class="a" style="left:569px;top:625px;width:11px;height:17px;background:#f7f7f7"></div>
<div class="a" style="left:860px;top:625px;width:1px;height:17px;background:#e8e8e8"></div>
<div class="a" style="left:925px;top:625px;width:1px;height:17px;background:#e8e8e8"></div>
<div class="a" style="left:990px;top:625px;width:1px;height:17px;background:#e8e8e8"></div>
<div class="a" style="left:1055px;top:625px;width:1px;height:17px;background:#e8e8e8"></div>
<div class="a" style="left:1120px;top:625px;width:1px;height:17px;background:#e8e8e8"></div>
<div class="a" style="left:1185px;top:625px;width:1px;height:17px;background:#e8e8e8"></div>
<div class="a" style="left:1273px;top:625px;width:1px;height:17px;background:#e8e8e8"></div>
<div class="a" style="left:569px;top:642px;width:765px;height:1px;background:#e8e8e8"></div>
<div class="a" style="left:580px;top:625px;width:1px;height:17px;background:#e4e4e4"></div>
<div class="t gd" style="left:583px;top:629px;;letter-spacing:-0.15px">PATIO B - CONTEINERS</div>
<div class="t gd" style="left:928px;top:629px;">00000</div>
<div class="t gd" style="left:993px;top:629px;">00003</div>
<div class="t gd" style="left:1058px;top:629px;">00002</div>
<div class="t gd" style="left:1123px;top:629px;">00001</div>
<div class="t gd" style="left:1188px;top:629px;">00003</div>
<div class="t gd" style="left:1277px;top:629px;">NAO</div>
<div class="a" style="left:1334px;top:514px;width:18px;height:129px;background:#f0f0f0"></div>
<svg class="a" style="left:1338px;top:521px" width="8" height="5"><path d="M0.5 4.5L4 1l3.5 3.5" fill="none" stroke="#1a9fca" stroke-width="1"/></svg>
<div class="a" style="left:1335px;top:532px;width:15px;height:8px;background:#68acc0"></div>
<svg class="a" style="left:1338px;top:631px" width="8" height="5"><path d="M0.5 0.5L4 4l3.5-3.5" fill="none" stroke="#1a9fca" stroke-width="1"/></svg>
<div class="a" style="left:568px;top:642px;width:766px;height:16px;background:#f0f0f0"></div>
<div class="a" style="left:586px;top:643px;width:712px;height:15px;background:#68acc0"></div>
<svg class="a" style="left:575px;top:647px" width="5" height="8"><path d="M4.5 0.5L1 4l3.5 3.5" fill="none" stroke="#1a9fca" stroke-width="1"/></svg>
<svg class="a" style="left:1323px;top:647px" width="5" height="8"><path d="M0.5 0.5L4 4 0.5 7.5" fill="none" stroke="#1a9fca" stroke-width="1"/></svg>
<div class="t lbl" style="left:572px;top:666px;color:#1a9fca;font-size:11.5px;letter-spacing:-0.05px">Total Registros:</div>
<div class="a" style="left:656px;top:662px;width:1px;height:17px;background:#e2e4e5"></div>
<div class="t lbl" style="left:661px;top:666px;color:#1a9fca;font-size:11.5px;letter-spacing:0.3px">150</div>
<div class="a" style="left:756px;top:662px;width:1px;height:17px;background:#e2e4e5"></div>
</body></html>
